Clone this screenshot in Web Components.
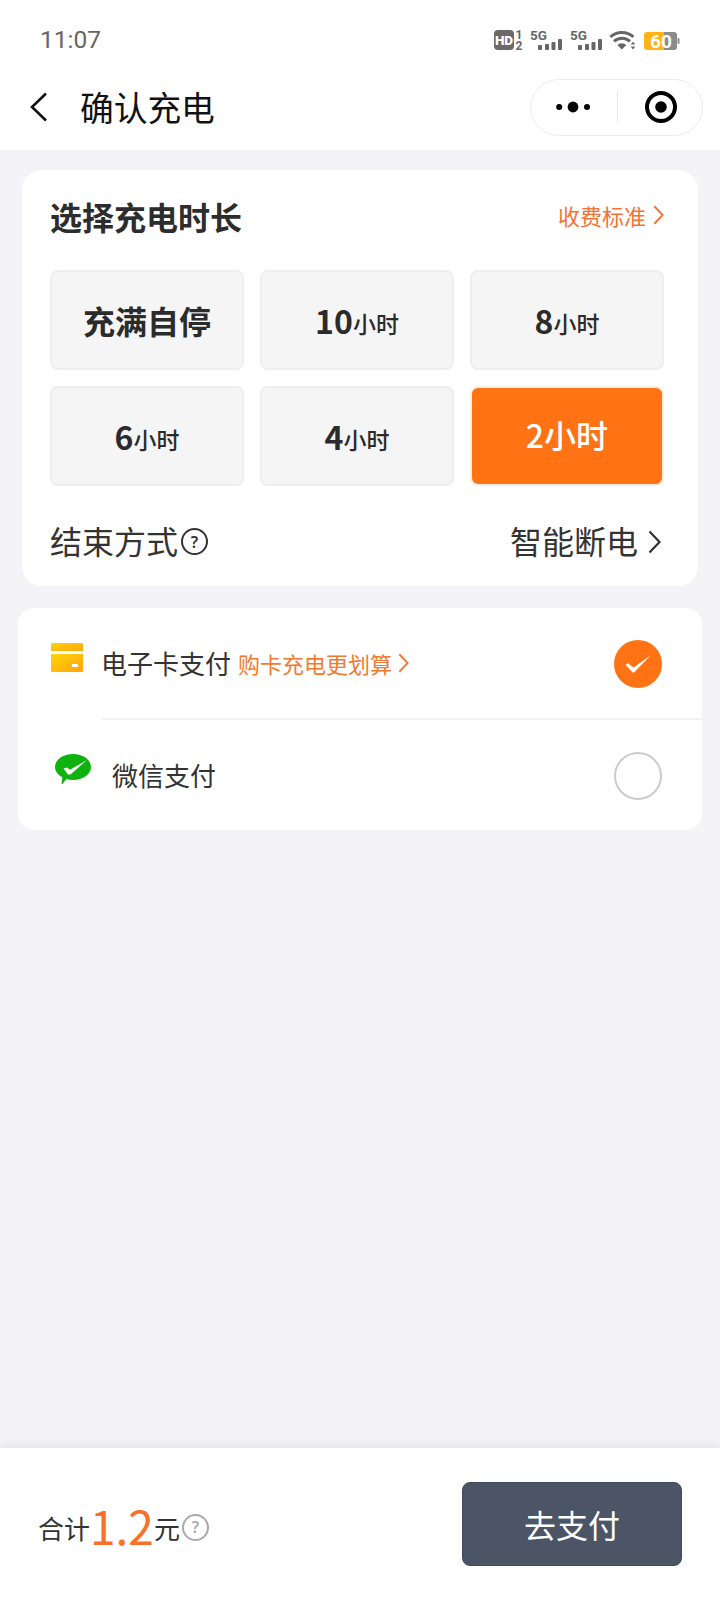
<!DOCTYPE html>
<html lang="zh-CN">
<head>
<meta charset="utf-8">
<title>确认充电</title>
<style>
  html, body { margin: 0; height: 100%; }
  body {
    width: 720px;
    height: 1600px;
    display: flex;
    flex-direction: column;
    background: #f4f4f6;
    font-family: "Noto Sans CJK SC", "Noto Sans", sans-serif;
    color: #2e2e2e;
    overflow: hidden;
  }
  bottom-bar { margin-top: auto; }
</style>
</head>
<body>
  <status-bar></status-bar>
  <nav-bar>确认充电</nav-bar>
  <duration-card></duration-card>
  <pay-card></pay-card>
  <bottom-bar></bottom-bar>

<script>
"use strict";

(() => {
  customElements.define("ui-chevron", class extends HTMLElement {
    constructor() {
      super();
      this.attachShadow({mode: "open"}).innerHTML = `
        <style>
          :host { display: inline-flex; color: inherit; }
          svg { display: block; }
        </style>
        <svg width="13" height="24" viewBox="0 0 13 24" fill="none">
          <path d="M1.5 1.5 L11.5 12 L1.5 22.5" stroke="currentColor" stroke-width="2.2"/>
        </svg>
      `;
      const h = this.getAttribute("height");
      if (h) {
        const svg = this.shadowRoot.querySelector("svg");
        svg.setAttribute("height", h);
        svg.setAttribute("width", Math.round(h * 13 / 24));
      }
    }
  });

  customElements.define("ui-help", class extends HTMLElement {
    constructor() {
      super();
      this.attachShadow({mode: "open"}).innerHTML = `
        <style>
          :host {
            display: inline-flex;
            align-items: center;
            justify-content: center;
            box-sizing: border-box;
            width: 27px;
            height: 27px;
            border: 2px solid currentColor;
            border-radius: 50%;
            font: 600 16px/1 "Noto Sans", sans-serif;
          }
        </style>
        ?
      `;
    }
  });

  customElements.define("status-bar", class extends HTMLElement {
    constructor() {
      super();
      const signal = (x) => `
        <text x="${x}" y="11" font-size="13.5" font-weight="700" fill="#666" font-family="Roboto, sans-serif">5G</text>
        <rect x="${x + 8}" y="16" width="4" height="5" rx="1" fill="#666"/>
        <rect x="${x + 15}" y="15" width="4" height="6" rx="1" fill="#666"/>
        <rect x="${x + 21.5}" y="13" width="4" height="8" rx="1" fill="#666"/>
        <rect x="${x + 28}" y="10" width="4" height="11" rx="1" fill="#666"/>
      `;
      this.attachShadow({mode: "open"}).innerHTML = `
        <style>
          :host {
            display: flex;
            justify-content: space-between;
            height: 70px;
            padding: 0 40px;
            box-sizing: border-box;
            background: #fff;
          }
          #time {
            font: 400 24.5px/30px Roboto, sans-serif;
            color: #666;
            margin-top: 25px;
          }
          svg { display: block; margin: 21px -2px 0 0; }
        </style>
        <div id="time">11:07</div>
        <svg width="188" height="34" viewBox="0 -8 188 34">
          <rect x="0" y="1" width="20" height="20" rx="4" fill="#6a6a6a"/>
          <text x="10" y="16" font-size="13.5" font-weight="900" fill="#fff" text-anchor="middle" font-family="Roboto, sans-serif">HD</text>
          <text x="25" y="10" font-size="12" font-weight="700" fill="#666" text-anchor="middle" font-family="Roboto, sans-serif">1</text>
          <text x="25" y="21" font-size="12" font-weight="700" fill="#666" text-anchor="middle" font-family="Roboto, sans-serif">2</text>
          ${signal(36)}
          ${signal(76)}
          <g fill="none" stroke="#666" stroke-width="3">
            <path d="M116.4 8 A17 17 0 0 1 139.4 8"/>
            <path d="M120 12.4 A11.5 11.5 0 0 1 136 12.4"/>
          </g>
          <path d="M123.3 16 A6.5 6.5 0 0 1 132.3 16 L127.8 20.6 Z" fill="#666"/>
          <path d="M136.7 15.5 L139 12.8 L141.3 15.5 Z M136.7 17.5 L139 20.4 L141.3 17.5 Z" fill="#666"/>
          <path d="M170 3 H180 a3 3 0 0 1 3 3 V18 a3 3 0 0 1 -3 3 H170 Z" fill="#8b8b8b"/>
          <path d="M153 3 H170 V21 H153 a3 3 0 0 1 -3 -3 V6 a3 3 0 0 1 3 -3 Z" fill="#ffb414"/>
          <rect x="183.5" y="9" width="2" height="6" rx="1" fill="#8b8b8b"/>
          <text x="167" y="18.5" font-size="19" font-weight="700" fill="#fff" text-anchor="middle" font-family="Roboto, sans-serif">60</text>
        </svg>
      `;
    }
  });

  customElements.define("nav-bar", class extends HTMLElement {
    constructor() {
      super();
      this.attachShadow({mode: "open"}).innerHTML = `
        <style>
          :host {
            display: flex;
            align-items: center;
            height: 80px;
            padding: 0 17px 6px 30px;
            box-sizing: border-box;
            background: #fff;
          }
          #back { display: block; margin-right: 32px; }
          #title { flex: 1; font-size: 33.7px; line-height: 44px; color: #111; }
          #capsule {
            display: flex;
            align-items: center;
            width: 173px;
            height: 57px;
            box-sizing: border-box;
            border: 1px solid #ececec;
            border-radius: 29px;
          }
          #capsule > div {
            display: flex;
            align-items: center;
            justify-content: center;
          }
          #more { width: 86px; }
          #record { flex: 1; padding-left: 2px; }
          #sep { width: 1px; height: 34px; background: #e8e8e8; }
        </style>
        <svg id="back" width="18" height="30" viewBox="0 0 18 30" fill="none">
          <path d="M16 1.5 L2 15 L16 28.5" stroke="#111" stroke-width="2.6"/>
        </svg>
        <div id="title"><slot></slot></div>
        <div id="capsule">
          <div id="more">
            <svg width="36" height="12" viewBox="0 0 36 12">
              <circle cx="3.2" cy="6" r="3" fill="#000"/>
              <circle cx="17" cy="6" r="5.4" fill="#000"/>
              <circle cx="31" cy="6" r="3" fill="#000"/>
            </svg>
          </div>
          <span id="sep"></span>
          <div id="record">
            <svg width="34" height="34" viewBox="0 0 34 34">
              <circle cx="17" cy="17" r="14" fill="none" stroke="#000" stroke-width="4"/>
              <circle cx="17" cy="17" r="5.8" fill="#000"/>
            </svg>
          </div>
        </div>
      `;
    }
  });

  customElements.define("dur-option", class extends HTMLElement {
    constructor() {
      super();
      this.attachShadow({mode: "open"}).innerHTML = `
        <style>
          :host {
            display: flex;
            align-items: center;
            justify-content: center;
            box-sizing: border-box;
            height: 100px;
            background: #f5f5f5;
            border: 2px solid #eeeeee;
            border-radius: 8px;
            font-size: 32px;
            font-weight: 700;
            color: #2b2b2b;
          }
          :host([selected]) {
            background: #ff7315;
            border-color: #fdeee3;
            color: #fff;
            padding-bottom: 4px;
            font-weight: 500;
          }
        </style>
        <slot></slot>
      `;
    }
  });

  customElements.define("duration-card", class extends HTMLElement {
    constructor() {
      super();
      const unit = `<small>小时</small>`;
      this.attachShadow({mode: "open"}).innerHTML = `
        <style>
          :host {
            display: block;
            margin: 20px 22px 0;
            padding: 0 34px 0 28px;
            background: #fff;
            border-radius: 20px;
          }
          header {
            display: flex;
            align-items: center;
            justify-content: space-between;
            height: 92px;
            margin-bottom: 8px;
          }
          h2 { margin: 0; font-size: 32px; font-weight: 700; color: #2d2d2d; line-height: 44px; }
          #fee {
            display: flex;
            align-items: center;
            gap: 7px;
            margin-bottom: 2px;
            font-size: 22px;
            color: #f37236;
          }
          #grid {
            display: grid;
            grid-template-columns: repeat(3, 1fr);
            gap: 16px;
          }
          small { font-size: 23px; font-weight: 500; display: inline-block; margin-top: 6px; }
          .sel small { font-size: inherit; margin: 0; }
          footer {
            display: flex;
            align-items: center;
            justify-content: space-between;
            height: 100px;
            padding-top: 7px;
            box-sizing: border-box;
            font-size: 32px;
            line-height: 44px;
            color: #333;
          }
          footer > div { display: flex; align-items: center; }
          footer ui-help { margin: 4px 0 0 3px; color: #333; }
          footer ui-chevron { margin: 4px 3px 0 10px; }
        </style>
        <header>
          <h2>选择充电时长</h2>
          <div id="fee">收费标准<ui-chevron height="20"></ui-chevron></div>
        </header>
        <div id="grid">
          <dur-option>充满自停</dur-option>
          <dur-option>10${unit}</dur-option>
          <dur-option>8${unit}</dur-option>
          <dur-option>6${unit}</dur-option>
          <dur-option>4${unit}</dur-option>
          <dur-option selected class="sel">2${unit}</dur-option>
        </div>
        <footer>
          <div><span>结束方式</span><ui-help></ui-help></div>
          <div><span>智能断电</span><ui-chevron></ui-chevron></div>
        </footer>
      `;
    }
  });

  customElements.define("pay-row", class extends HTMLElement {
    constructor() {
      super();
      this.attachShadow({mode: "open"}).innerHTML = `
        <style>
          :host {
            display: flex;
            align-items: center;
            height: 110px;
            padding: 2px 40px 0 0;
            box-sizing: border-box;
            font-size: 26px;
            color: #333;
          }
          #icon { flex: none; display: flex; align-self: flex-start; margin-top: -2px; }
          #label { flex: 1; display: flex; align-items: center; padding-bottom: 4px; }
          #mark {
            flex: none;
            width: 48px;
            height: 48px;
            box-sizing: border-box;
            border-radius: 50%;
            border: 2px solid #cccccc;
            display: flex;
            align-items: center;
            justify-content: center;
          }
          #mark svg { display: none; }
          :host([checked]) #mark { background: #ff7315; border: 0; }
          :host([checked]) #mark svg { display: block; }
        </style>
        <div id="icon"><slot name="icon"></slot></div>
        <div id="label"><slot></slot></div>
        <div id="mark">
          <svg width="26" height="18" viewBox="0 0 26 18">
            <path d="M0.5 10 L3 8.2 L8.5 12.6 L25.5 0.5 L9 17.6 L7.6 17.6 Z" fill="#fff"/>
          </svg>
        </div>
      `;
    }
  });

  customElements.define("pay-card", class extends HTMLElement {
    constructor() {
      super();
      this.attachShadow({mode: "open"}).innerHTML = `
        <style>
          :host {
            display: block;
            margin: 22px 18px 0;
            background: #fff;
            border-radius: 16px;
          }
          hr { margin: 0 0 0 84px; border: 0; height: 2px; background: #f1f1f3; }
          #card-icon { display: block; margin: 35px 18px 0 33px; }
          #wx-icon { display: block; margin: 33px 21px 0 37px; }
          .promo {
            display: inline-flex;
            align-items: center;
            gap: 6px;
            margin: 2px 0 0 7px;
            font-size: 22px;
            color: #f27a2f;
          }
        </style>
        <pay-row checked>
          <svg id="card-icon" slot="icon" width="32" height="29" viewBox="0 0 32 29">
            <defs>
              <linearGradient id="g" x1="0" y1="0" x2="1" y2="1">
                <stop offset="0" stop-color="#ffd40a"/>
                <stop offset="1" stop-color="#ffa40f"/>
              </linearGradient>
            </defs>
            <path d="M1.5 0 H30.5 A1.5 1.5 0 0 1 32 1.5 V8 H0 V1.5 A1.5 1.5 0 0 1 1.5 0 Z" fill="url(#g)"/>
            <path d="M0 11 H32 V27.5 A1.5 1.5 0 0 1 30.5 29 H1.5 A1.5 1.5 0 0 1 0 27.5 Z" fill="url(#g)"/>
            <rect x="21" y="21" width="6" height="3" fill="#fff"/>
          </svg>
          电子卡支付<span class="promo">购卡充电更划算<ui-chevron height="20"></ui-chevron></span>
        </pay-row>
        <hr>
        <pay-row>
          <svg id="wx-icon" slot="icon" width="36" height="32" viewBox="0 0 36 32">
            <path d="M18 1 C28 1 36 6.8 36 14 C36 21.2 28 27 18 27 C15.6 27 13.4 26.7 11.3 26 L7.5 31 C7 31.4 6.5 31 6.6 30.4 L7.3 24.2 C2.8 21.8 0 18.1 0 14 C0 6.8 8 1 18 1 Z" fill="#0fb20f"/>
            <path d="M8.5 15.4 L12 14.4 L15 16.8 L32 7 L15.4 21.6 L13 21.6 Z" fill="#fff"/>
          </svg>
          微信支付
        </pay-row>
      `;
    }
  });

  customElements.define("bottom-bar", class extends HTMLElement {
    constructor() {
      super();
      this.attachShadow({mode: "open"}).innerHTML = `
        <style>
          :host {
            display: flex;
            align-items: center;
            justify-content: space-between;
            height: 152px;
            padding: 0 38px;
            box-sizing: border-box;
            background: #fff;
            box-shadow: 0 -3px 10px rgba(0, 0, 0, .07);
          }
          #total {
            display: flex;
            align-items: center;
            margin-top: 6px;
            font-size: 26px;
            color: #333;
          }
          #amount {
            font-size: 46px;
            line-height: 50px;
            color: #f9702b;
            margin: -4px 0 0 0;
            font-weight: 400;
          }
          ui-help { color: #aaa; margin-left: 2px; }
          #pay {
            width: 220px;
            height: 84px;
            box-sizing: border-box;
            border: 1px solid #414b5b;
            border-radius: 8px;
            background: #4b5566;
            color: #fff;
            font-size: 32px;
            display: flex;
            align-items: center;
            justify-content: center;
          }
        </style>
        <div id="total">合计<span id="amount">1.2</span>元<ui-help></ui-help></div>
        <div id="pay">去支付</div>
      `;
    }
  });
})();
</script>
</body>
</html>
